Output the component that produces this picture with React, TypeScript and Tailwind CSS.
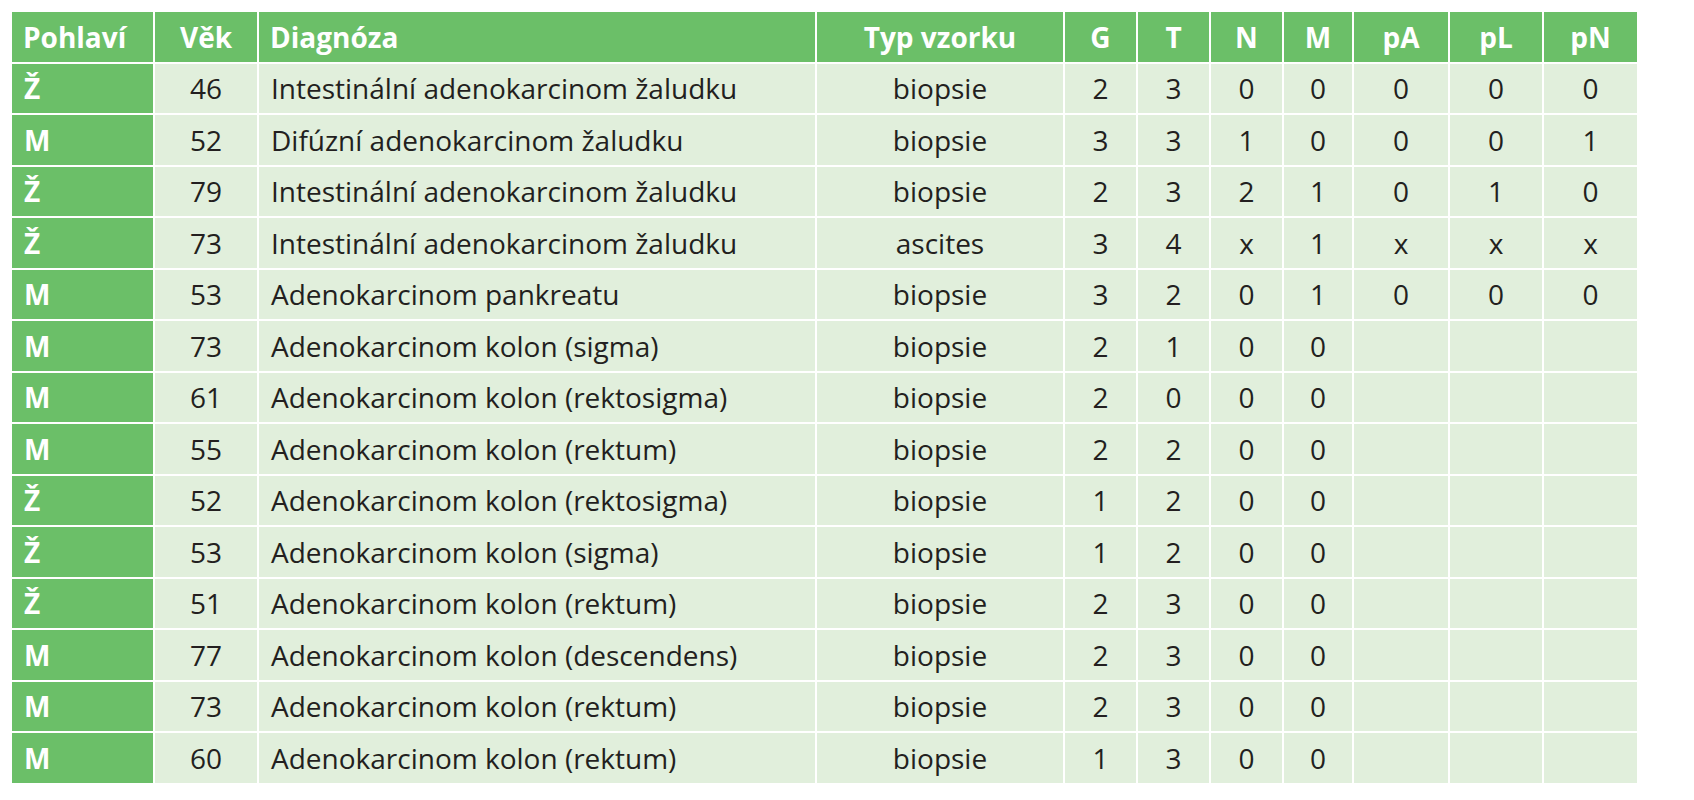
import React from "react"

const rows: string[][] = [
  ["Ž", "46", "Intestinální adenokarcinom žaludku", "biopsie", "2", "3", "0", "0", "0", "0", "0"],
  ["M", "52", "Difúzní adenokarcinom žaludku", "biopsie", "3", "3", "1", "0", "0", "0", "1"],
  ["Ž", "79", "Intestinální adenokarcinom žaludku", "biopsie", "2", "3", "2", "1", "0", "1", "0"],
  ["Ž", "73", "Intestinální adenokarcinom žaludku", "ascites", "3", "4", "x", "1", "x", "x", "x"],
  ["M", "53", "Adenokarcinom pankreatu", "biopsie", "3", "2", "0", "1", "0", "0", "0"],
  ["M", "73", "Adenokarcinom kolon (sigma)", "biopsie", "2", "1", "0", "0", "", "", ""],
  ["M", "61", "Adenokarcinom kolon (rektosigma)", "biopsie", "2", "0", "0", "0", "", "", ""],
  ["M", "55", "Adenokarcinom kolon (rektum)", "biopsie", "2", "2", "0", "0", "", "", ""],
  ["Ž", "52", "Adenokarcinom kolon (rektosigma)", "biopsie", "1", "2", "0", "0", "", "", ""],
  ["Ž", "53", "Adenokarcinom kolon (sigma)", "biopsie", "1", "2", "0", "0", "", "", ""],
  ["Ž", "51", "Adenokarcinom kolon (rektum)", "biopsie", "2", "3", "0", "0", "", "", ""],
  ["M", "77", "Adenokarcinom kolon (descendens)", "biopsie", "2", "3", "0", "0", "", "", ""],
  ["M", "73", "Adenokarcinom kolon (rektum)", "biopsie", "2", "3", "0", "0", "", "", ""],
  ["M", "60", "Adenokarcinom kolon (rektum)", "biopsie", "1", "3", "0", "0", "", "", ""],
]

const headers = ["Pohlaví", "Věk", "Diagnóza", "Typ vzorku", "G", "T", "N", "M", "pA", "pL", "pN"]

export default function App() {
  return (
    <div className="min-h-[800px] bg-white p-[12px] font-['Open_Sans',sans-serif]">
      <div className="grid w-[1625px] grid-cols-[141px_102px_556px_246px_71px_71px_71px_68px_94px_92px_93px] auto-rows-[49.5px] gap-[2px] text-[28px] leading-none">
        {headers.map((h, i) => (
          <div
            key={h}
            className={
              "flex items-center bg-[#6bbf68] font-bold text-white " +
              (i === 0 || i === 2 ? "justify-start pl-[11px]" : "justify-center")
            }
          >
            {h}
          </div>
        ))}
        {rows.map((r, ri) =>
          r.map((c, ci) =>
            ci === 0 ? (
              <div key={ri + "-" + ci} className="flex items-center bg-[#6bbf68] pl-[12px] font-bold text-white">
                {c}
              </div>
            ) : (
              <div
                key={ri + "-" + ci}
                className={
                  "flex items-center bg-[#e1efdc] text-[#231f20] " +
                  (ci === 2 ? "justify-start pl-[12px]" : "justify-center")
                }
              >
                {c}
              </div>
            )
          )
        )}
      </div>
    </div>
  )
}
